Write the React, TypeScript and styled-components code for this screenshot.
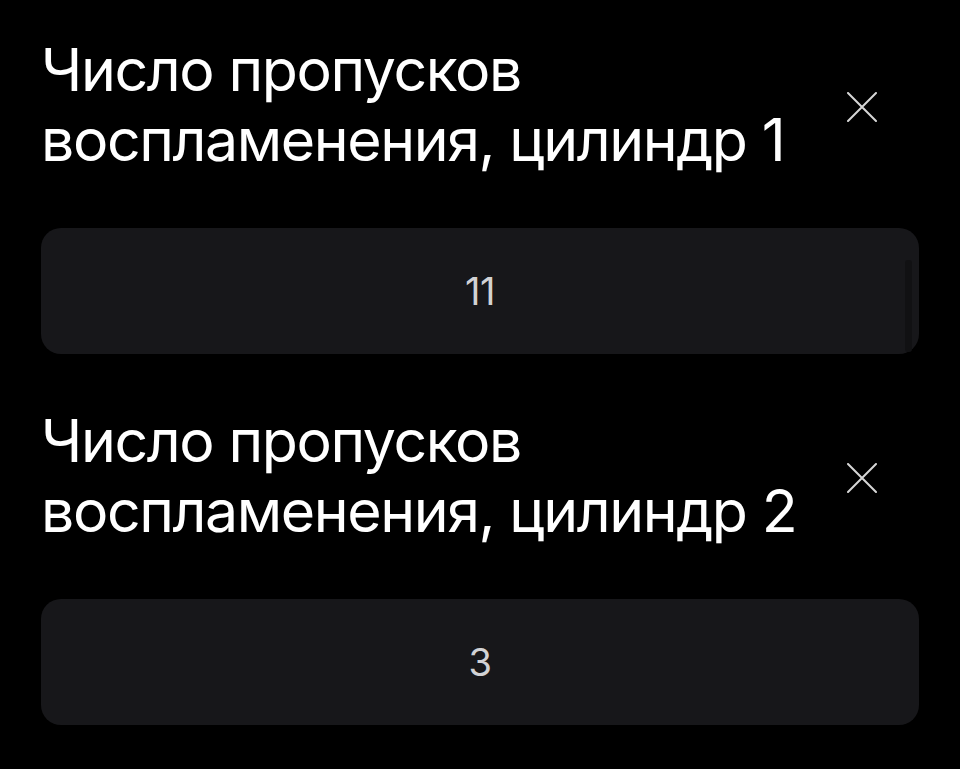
import React from "react";
import styled, { createGlobalStyle } from "styled-components";

const GlobalStyle = createGlobalStyle`
  html, body {
    margin: 0;
    padding: 0;
    background: #000;
  }
  body {
    font-family: "Inter", "Roboto", "Noto Sans", sans-serif;
    -webkit-font-smoothing: antialiased;
  }
`;

const Page = styled.main`
  width: 960px;
  min-height: 769px;
  box-sizing: border-box;
  padding: 35px 41px 0 41px;
  display: flex;
  flex-direction: column;
  gap: 52px;
`;

const Field = styled.section`
  display: flex;
  flex-direction: column;
  gap: 53px;
`;

const Header = styled.div`
  display: flex;
  align-items: center;
  justify-content: space-between;
`;

const Title = styled.h2`
  margin: 0;
  color: #fff;
  font-size: 59px;
  font-weight: 400;
  line-height: 70px;
  letter-spacing: -1.4px;
  white-space: pre-line;
`;

const CloseButton = styled.button`
  width: 44px;
  height: 44px;
  margin: 4px 35px 0 0;
  padding: 0;
  border: none;
  background: transparent;
  color: #d6d6d6;
  display: flex;
  align-items: center;
  justify-content: center;
  cursor: pointer;
`;

const ValueBox = styled.div`
  position: relative;
  height: 126px;
  border-radius: 20px;
  background: #17171a;
  display: flex;
  align-items: center;
  justify-content: center;
  color: #d2d2d5;
  font-size: 38px;
  letter-spacing: -0.5px;
`;

const ScrollTrack = styled.span`
  position: absolute;
  right: 7px;
  top: 32px;
  bottom: 2px;
  width: 7px;
  border-radius: 3px;
  background: #111113;
`;

interface FieldProps {
  title: string;
  value: string;
  scroll?: boolean;
}

const CloseIcon = () => (
  <svg width="30" height="30" viewBox="0 0 30 30" fill="none">
    <path d="M1 1L29 29M29 1L1 29" stroke="currentColor" strokeWidth="2" strokeLinecap="round" />
  </svg>
);

const CounterField: React.FC<FieldProps> = ({ title, value, scroll }) => (
  <Field>
    <Header>
      <Title>{title}</Title>
      <CloseButton aria-label="Удалить">
        <CloseIcon />
      </CloseButton>
    </Header>
    <ValueBox>
      {value}
      {scroll && <ScrollTrack />}
    </ValueBox>
  </Field>
);

export default function App() {
  return (
    <>
      <GlobalStyle />
      <Page>
        <CounterField
          title={"Число пропусков\nвоспламенения, цилиндр 1"}
          value="11"
          scroll
        />
        <CounterField
          title={"Число пропусков\nвоспламенения, цилиндр 2"}
          value="3"
        />
      </Page>
    </>
  );
}
